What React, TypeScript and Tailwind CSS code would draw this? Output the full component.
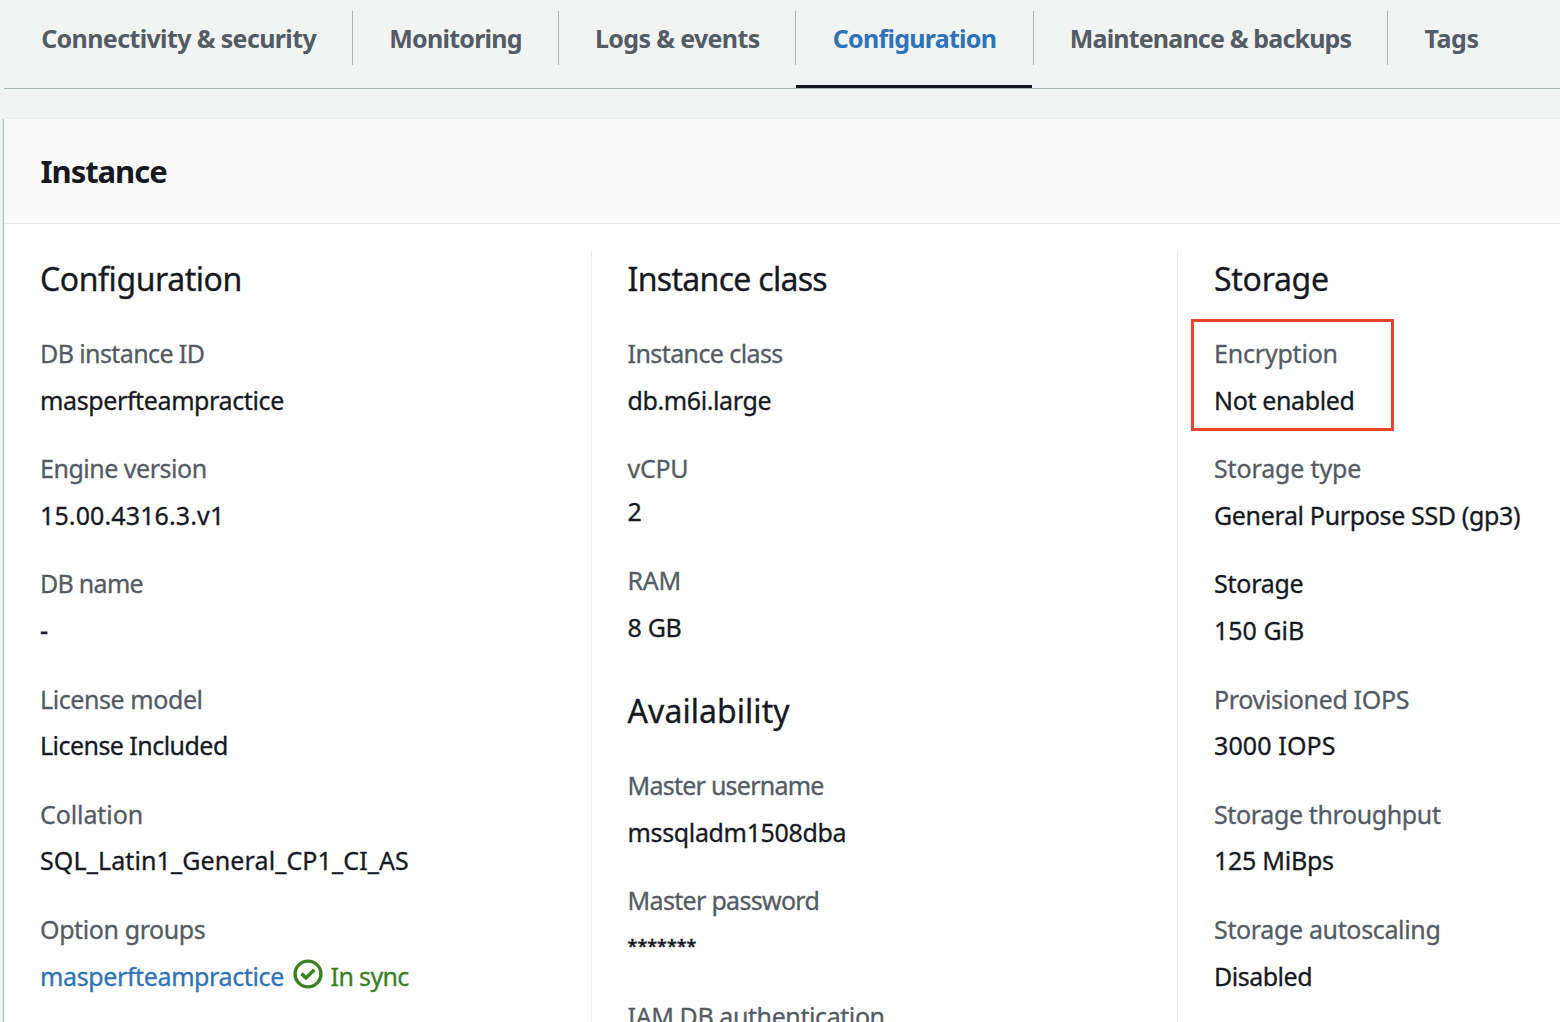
import React from "react";

type FieldData = {
  label: string;
  labelClass: string;
  value?: React.ReactNode;
  valueClass?: string;
  fieldClass?: string;
  highlighted?: boolean;
};

const tabs = [
  { name: "Connectivity & security", box: "w-[349px] pl-[37.2px] tracking-[-0.63px]" },
  { name: "Monitoring", box: "w-[206px] pl-[36.3px] tracking-[-0.75px]" },
  { name: "Logs & events", box: "w-[237px] pl-[36px] tracking-[-0.65px]" },
  { name: "Configuration", box: "w-[238px] pl-[36.8px] tracking-[-0.74px]", active: true },
  { name: "Maintenance & backups", box: "w-[354px] pl-[35.8px] tracking-[-0.83px]" },
  { name: "Tags", box: "w-[172px] pl-[36.5px] tracking-[-0.4px]" },
];

function CheckCircle() {
  return (
    <svg className="ml-[8.5px] mt-[1.5px] size-[30px] shrink-0" viewBox="0 0 30 30" fill="none" stroke="#3a801f">
      <circle cx="15" cy="15" r="12.9" strokeWidth="3.4" />
      <path d="M8.4 14.6 13 18.9 21.3 10.7" strokeWidth="3.5" />
    </svg>
  );
}

const configuration: FieldData[] = [
  { label: "DB instance ID", labelClass: "tracking-[-0.6px]", value: "masperfteampractice", valueClass: "tracking-[-0.38px]" },
  { label: "Engine version", labelClass: "tracking-[-0.48px]", value: "15.00.4316.3.v1", valueClass: "tracking-[0.12px]" },
  { label: "DB name", labelClass: "tracking-[-0.72px]", value: "-", valueClass: "font-medium" },
  { label: "License model", labelClass: "tracking-[-0.42px]", value: "License Included", valueClass: "tracking-[-0.54px]" },
  { label: "Collation", labelClass: "tracking-[-0.1px]", value: "SQL_Latin1_General_CP1_CI_AS", valueClass: "tracking-[0.12px]" },
  {
    label: "Option groups",
    labelClass: "tracking-[-0.4px]",
    value: (
      <span className="flex">
        <a className="w-[244px] tracking-[-0.38px] text-[#2e73b8]">masperfteampractice</a>
        <CheckCircle />
        <span className="ml-[8.1px] tracking-[-0.65px] text-[#3a801f]">In sync</span>
      </span>
    ),
  },
];

const instanceClass: FieldData[] = [
  { label: "Instance class", labelClass: "tracking-[-0.59px]", value: "db.m6i.large", valueClass: "tracking-[-0.4px]" },
  { label: "vCPU", labelClass: "tracking-[-0.3px]", value: "2", valueClass: "-mt-[3.8px]", fieldClass: "-mb-[3.2px]" },
  { label: "RAM", labelClass: "tracking-[-0.3px]", value: "8 GB", valueClass: "tracking-[-0.35px]" },
];

const availability: FieldData[] = [
  { label: "Master username", labelClass: "tracking-[-0.76px]", value: "mssqladm1508dba", valueClass: "tracking-[-0.36px]" },
  { label: "Master password", labelClass: "tracking-[-0.69px]", value: "*******", valueClass: "-mt-[1px] text-[18px] font-semibold" },
  { label: "IAM DB authentication", labelClass: "tracking-[-0.41px]" },
];

const storage: FieldData[] = [
  { label: "Encryption", labelClass: "tracking-[-0.2px]", value: "Not enabled", valueClass: "tracking-[-0.36px]", highlighted: true },
  { label: "Storage type", labelClass: "tracking-[-0.14px]", value: "General Purpose SSD (gp3)", valueClass: "tracking-[-0.35px]" },
  { label: "Storage", labelClass: "tracking-[-0.25px] text-[#16191f]", value: "150 GiB", valueClass: "tracking-[0px]" },
  { label: "Provisioned IOPS", labelClass: "tracking-[-0.34px]", value: "3000 IOPS", valueClass: "tracking-[0.12px]" },
  { label: "Storage throughput", labelClass: "tracking-[-0.37px]", value: "125 MiBps", valueClass: "tracking-[-0.26px]" },
  { label: "Storage autoscaling", labelClass: "tracking-[-0.35px]", value: "Disabled", valueClass: "tracking-[-0.5px]" },
];

function Field({ label, labelClass, value, valueClass = "", fieldClass = "", highlighted }: FieldData) {
  return (
    <div className={`relative h-[115.2px] shrink-0 whitespace-nowrap text-[25px] leading-9 ${fieldClass}`}>
      <div className={`mb-[10.5px] ${labelClass} ${labelClass.includes("text-") ? "" : "text-[#545b64]"}`}>{label}</div>
      {value && <div className={`leading-9 text-[#16191f] ${valueClass}`}>{value}</div>}
      {highlighted && (
        <div className="absolute -left-[23px] -top-[16px] h-[112px] w-[203px] border-[3px] border-[#e8442b]" />
      )}
    </div>
  );
}

function Section({ title, titleClass, fields }: { title: string; titleClass: string; fields: FieldData[] }) {
  return (
    <section>
      <h3 className={`mb-[32.3px] whitespace-nowrap text-[32px] leading-[48px] text-[#16191f] ${titleClass}`}>{title}</h3>
      {fields.map((f) => (
        <Field key={f.label} {...f} />
      ))}
    </section>
  );
}

export default function App() {
  return (
    <div className="flex h-[1022px] w-[1560px] flex-col overflow-hidden bg-[#f2f4f3] pl-1 font-['Noto_Sans',sans-serif]">
      <nav className="flex h-[89px] shrink-0 border-b border-[#a5b5b1]">
        {tabs.map((t, i) => (
          <div key={t.name} className="flex h-[88px] flex-col pt-[11px]">
            <div
              className={`h-[54px] whitespace-nowrap text-[25px] font-bold leading-[54px] ${t.box} ${
                i < tabs.length - 1 ? "border-r border-[#a9b8b5]" : ""
              } ${t.active ? "text-[#2e73b8]" : "text-[#545b64]"}`}
            >
              {t.name}
            </div>
            {t.active && <div className="mt-auto h-[3px] w-[236px] bg-[#16191f]" />}
          </div>
        ))}
      </nav>

      <main className="mt-[29px] flex flex-1 flex-col border-t border-[#eaeceb] bg-white shadow-[-1px_1px_1px_0_rgba(0,28,36,0.25)]">
        <header className="flex h-[105px] shrink-0 items-center border-b border-[#e9ebeb] bg-[#fafafa] pl-[36.5px]">
          <h2 className="text-[31px] font-bold leading-[48px] tracking-[-1.04px] text-[#16191f]">Instance</h2>
        </header>
        <div className="mt-[27px] flex h-[771px] overflow-hidden [-webkit-text-stroke:0.3px]">
          <div className="w-[587px] pl-[36px] pt-[3.8px]">
            <Section title="Configuration" titleClass="tracking-[-0.44px]" fields={configuration} />
          </div>
          <div className="flex w-[586px] flex-col gap-[9.4px] border-l border-[#eaeded] pl-[35.6px] pt-[3.8px]">
            <Section title="Instance class" titleClass="tracking-[-0.7px]" fields={instanceClass} />
            <Section title="Availability" titleClass="tracking-[0.05px]" fields={availability} />
          </div>
          <div className="w-[383px] border-l border-[#eaeded] pl-[36px] pt-[3.8px]">
            <Section title="Storage" titleClass="tracking-[-0.28px]" fields={storage} />
          </div>
        </div>
      </main>
    </div>
  );
}
